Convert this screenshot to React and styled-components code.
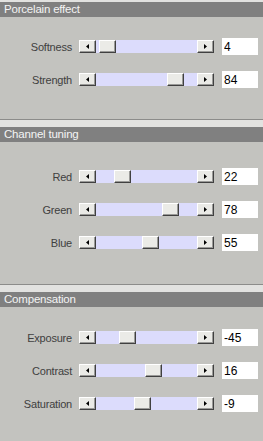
import React from 'react';
import styled, { createGlobalStyle } from 'styled-components';

const GlobalStyle = createGlobalStyle`
  html, body {
    margin: 0;
    padding: 0;
    background: #c3c3bf;
  }
  * { box-sizing: border-box; }
`;

const Panel = styled.div`
  width: 263px;
  min-height: 100vh;
  background: #c3c3bf;
  font-family: "Liberation Sans", Arial, sans-serif;
  display: flex;
  flex-direction: column;
`;

const Separator = styled.div`
  height: ${(p) => (p.$first ? '2px' : '8px')};
  background: #e2e2e0;
  border-top: ${(p) => (p.$first ? 'none' : '1px solid #8c8c8a')};
`;

const Header = styled.div`
  height: 15px;
  background: #808080;
  color: #f4f4f4;
  font-size: 11.5px;
  line-height: 15px;
  padding-left: 4px;
  letter-spacing: -0.2px;
`;

const Body = styled.div`
  display: flex;
  flex-direction: column;
  gap: 16px;
  padding-top: ${(p) => p.$top}px;
  padding-bottom: ${(p) => p.$bottom}px;
`;

const Row = styled.div`
  display: flex;
  align-items: center;
  height: 17px;
`;

const Label = styled.div`
  width: 72px;
  margin-right: 7px;
  text-align: right;
  font-size: 11px;
  letter-spacing: -0.2px;
  color: #404040;
`;

const Slider = styled.div`
  display: flex;
  width: 135px;
  height: 13px;
`;

const ArrowButton = styled.div`
  width: 17px;
  height: 13px;
  flex: none;
  background: #eaeae6;
  border-top: 1px solid #ffffff;
  border-left: 1px solid #ffffff;
  border-right: 1px solid #404040;
  border-bottom: 1px solid #404040;
  box-shadow: inset -1px -1px 0 #9a9a98;
  display: flex;
  align-items: center;
  justify-content: center;
`;

const Track = styled.div`
  flex: 1;
  position: relative;
  background: #dcdcfc;
`;

const Thumb = styled.div`
  position: absolute;
  top: 0;
  width: 17px;
  height: 13px;
  background: #ebebe7;
  border-top: 1px solid #ffffff;
  border-left: 1px solid #ffffff;
  border-right: 1px solid #404040;
  border-bottom: 1px solid #404040;
  box-shadow: inset -1px -1px 0 #9a9a98;
`;

const Value = styled.input`
  margin-left: 8px;
  width: 36px;
  height: 17px;
  border: none;
  outline: none;
  background: #ffffff;
  color: #000000;
  font-family: "Liberation Sans", Arial, sans-serif;
  font-size: 12px;
  padding: 0 0 0 2px;
`;

const Arrow = ({ dir }) => (
  <svg width="3" height="5" viewBox="0 0 3 5">
    {dir === 'left' ? (
      <polygon points="3,0 3,5 0,2.5" fill="#000" />
    ) : (
      <polygon points="0,0 0,5 3,2.5" fill="#000" />
    )}
  </svg>
);

const SliderRow = ({ label, value, min, max }) => {
  const pos = ((value - min) / (max - min)) * 84;
  return (
    <Row>
      <Label>{label}</Label>
      <Slider>
        <ArrowButton>
          <Arrow dir="left" />
        </ArrowButton>
        <Track>
          <Thumb style={{ left: pos }} />
        </Track>
        <ArrowButton>
          <Arrow dir="right" />
        </ArrowButton>
      </Slider>
      <Value readOnly value={value} />
    </Row>
  );
};

const sections = [
  {
    title: 'Porcelain effect',
    top: 21,
    bottom: 31,
    rows: [
      { label: 'Softness', value: 4, min: 0, max: 100 },
      { label: 'Strength', value: 84, min: 0, max: 100 },
    ],
  },
  {
    title: 'Channel tuning',
    top: 26,
    bottom: 33,
    rows: [
      { label: 'Red', value: 22, min: 0, max: 100 },
      { label: 'Green', value: 78, min: 0, max: 100 },
      { label: 'Blue', value: 55, min: 0, max: 100 },
    ],
  },
  {
    title: 'Compensation',
    top: 22,
    bottom: 20,
    rows: [
      { label: 'Exposure', value: -45, min: -100, max: 100 },
      { label: 'Contrast', value: 16, min: -100, max: 100 },
      { label: 'Saturation', value: -9, min: -100, max: 100 },
    ],
  },
];

const App = () => (
  <>
    <GlobalStyle />
    <Panel>
      {sections.map((s, i) => (
        <React.Fragment key={s.title}>
          <Separator $first={i === 0} />
          <Header>{s.title}</Header>
          <Body $top={s.top} $bottom={s.bottom}>
            {s.rows.map((r) => (
              <SliderRow key={r.label} {...r} />
            ))}
          </Body>
        </React.Fragment>
      ))}
    </Panel>
  </>
);

export default App;
